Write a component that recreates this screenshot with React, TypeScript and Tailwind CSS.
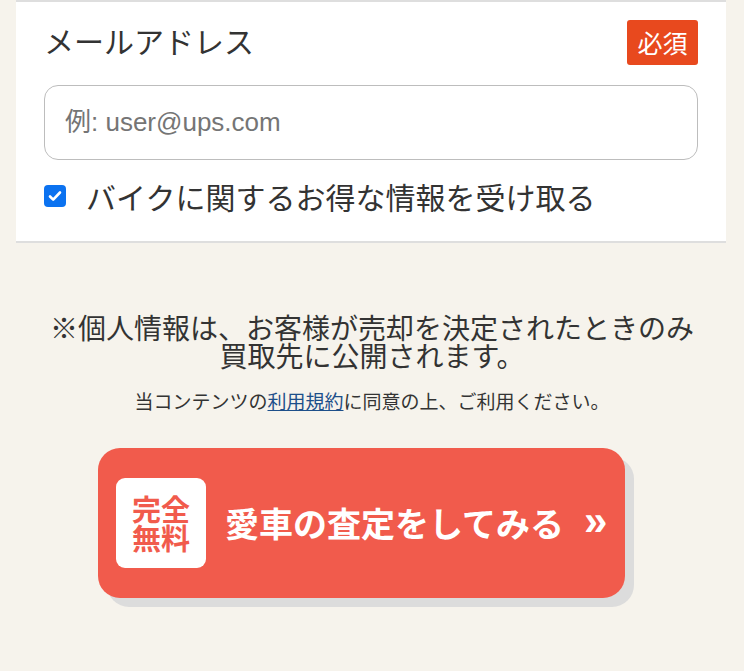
import React from "react";

export default function App() {
  return (
    <div
      className="min-h-[671px] w-full bg-[#f6f3ec] text-[#333]"
      style={{ fontFamily: '"Noto Sans CJK JP", "Noto Sans", "Liberation Sans", sans-serif' }}
    >
      <div className="mx-4 w-[710px] border-y-2 border-[#dedede] bg-white px-7 pb-[25px] pt-[18px]">
        <div className="flex items-start justify-between">
          <div className="text-[30px] leading-[40px] text-[#333]">メールアドレス</div>
          <div className="flex h-[45px] w-[71px] items-center justify-center rounded-[3px] bg-[#e8491e] text-[25px] leading-none text-white">
            必須
          </div>
        </div>
        <div className="mt-5 flex h-[75px] items-center rounded-[14px] border border-[#bdbdbd] px-5">
          <span
            className="text-[26px] text-[#757575]"
            style={{ fontFamily: '"Liberation Sans", "Noto Sans CJK JP", sans-serif' }}
          >
            例: user@ups.com
          </span>
        </div>
        <label className="mt-4 flex items-center">
          <span className="flex h-[22px] w-[22px] items-center justify-center rounded-[4px] bg-[#0b72f0]">
            <svg width="16" height="16" viewBox="0 0 16 16">
              <path d="M3 8.5l3.2 3.2L13 4.5" fill="none" stroke="white" strokeWidth="2.6" strokeLinecap="round" strokeLinejoin="round" />
            </svg>
          </span>
          <span className="ml-[20px] text-[30px] leading-[40px] text-[#333]">バイクに関するお得な情報を受け取る</span>
        </label>
      </div>

      <div className="pt-[70px] text-center">
        <p className="text-[28px] leading-[28px] text-[#333]">
          ※個人情報は、お客様が売却を決定されたときのみ
          <br />
          買取先に公開されます。
        </p>
        <p className="mt-[20px] text-[19px] leading-[24px] text-[#333]">
          当コンテンツの<span className="text-[#1d4f8a] underline">利用規約</span>に同意の上、ご利用ください。
        </p>
      </div>

      <div className="mt-[35px] flex justify-center">
        <div className="ml-[-21px] flex h-[150px] w-[527px] items-center rounded-[22px] bg-[#f15b4c] pl-[18px] shadow-[9px_9px_0_#dcdcdc]">
          <div className="flex h-[90px] w-[90px] flex-col items-center justify-center rounded-[9px] bg-white text-[29px] font-bold leading-[29px] text-[#f15b4c]">
            <span>完全</span>
            <span>無料</span>
          </div>
          <div className="ml-[19px] text-[34px] font-bold leading-none text-white">愛車の査定をしてみる</div>
          <div
            className="ml-[20px] pb-[4px] text-[42px] font-bold leading-none text-white"
            style={{ fontFamily: '"Liberation Sans", sans-serif' }}
          >
            »
          </div>
        </div>
      </div>
    </div>
  );
}
